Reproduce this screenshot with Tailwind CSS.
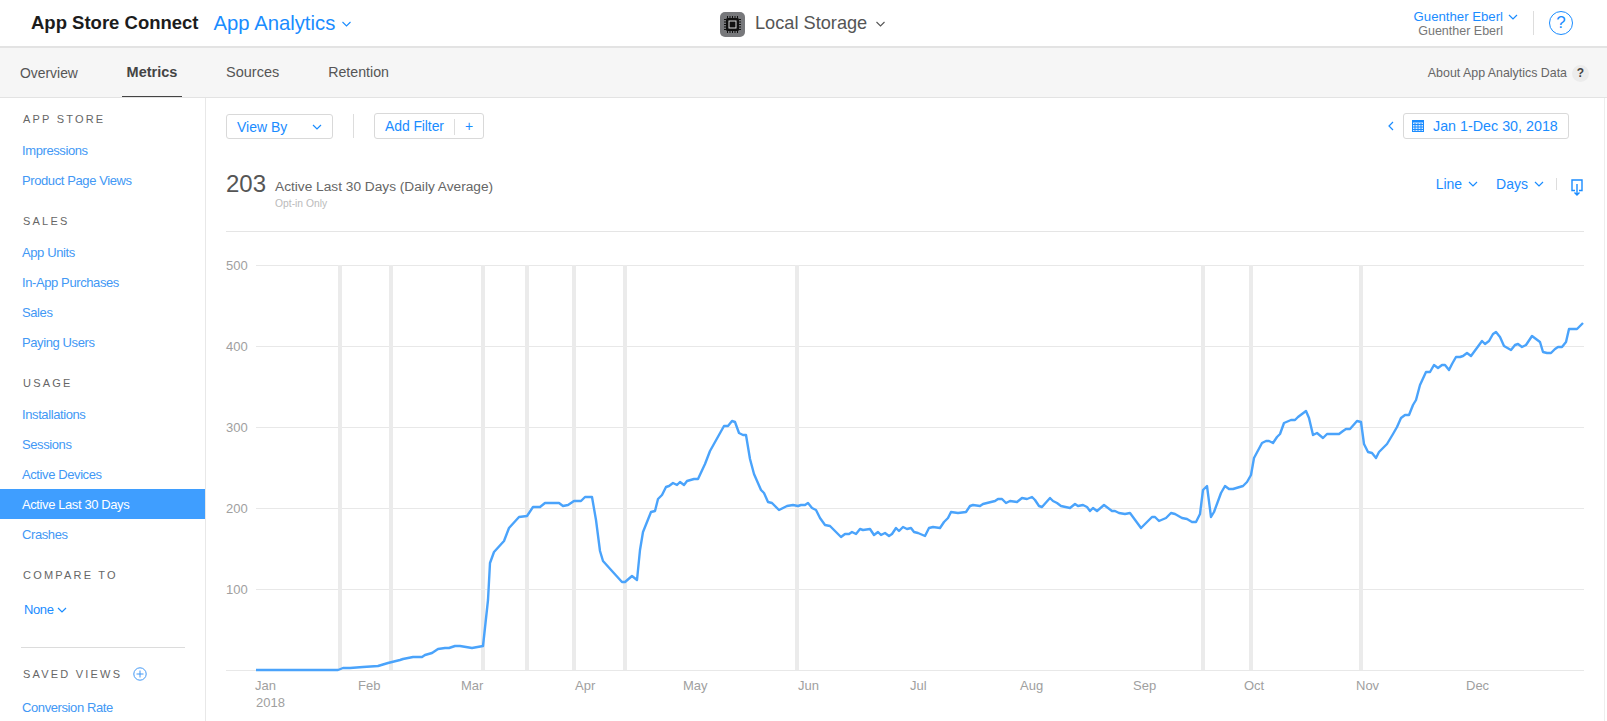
<!DOCTYPE html>
<html>
<head>
  <title>App Store Connect - App Analytics</title>
  <script src="https://cdn.jsdelivr.net/npm/@tailwindcss/browser@4"></script>
</head>
<body class="bg-white h-[721px] overflow-hidden font-['Liberation_Sans',Arial,sans-serif] text-[#1a8cff]">
  <!-- Top header -->
  <header class="h-[48px] border-b-2 border-[#e3e3e3] flex items-center relative">
    <h1 class="ml-[31px] text-[18.500px] font-bold text-[#1c1c1c]">App Store Connect</h1>
    <a class="ml-[15px] text-[20.300px] text-[#1a8cff] flex items-center">App Analytics
      <svg class="ml-[6px] mt-[1px]" width="11" height="6" viewBox="0 0 10 6" fill="none" stroke="currentColor" stroke-width="1.1"><path d="M1 1l4 4 4-4"/></svg>
    </a>
    <div class="absolute left-[720px] top-[11px] flex items-center text-[#555]">
      <svg width="25" height="25" viewBox="0 0 25 25">
        <rect width="25" height="25" rx="5" fill="#77787b"/>
        <rect x="6" y="6" width="13" height="13" rx="1.5" fill="#111"/>
        <rect x="9" y="9" width="7" height="7" fill="none" stroke="#ddd" stroke-width="1"/>
        <path d="M7.500 4v17M10 4v17M12.500 4v17M15 4v17M17.500 4v17M4 7.500h17M4 10h17M4 12.500h17M4 15h17M4 17.500h17" stroke="#111" stroke-width="1" stroke-dasharray="2 13 2 20"/>
      </svg>
      <span class="ml-[10px] text-[18.200px] mt-[-1px]">Local Storage</span>
      <svg class="ml-[8px]" width="11" height="6" viewBox="0 0 10 6" fill="none" stroke="currentColor" stroke-width="1.1"><path d="M1 1l4 4 4-4"/></svg>
    </div>
    <div class="ml-auto flex items-center">
      <div class="text-[13.200px] leading-[14px] text-right mt-[1px]">
        <div class="flex items-center justify-end">Guenther Eberl
          <svg class="ml-[5px]" width="10" height="6" viewBox="0 0 10 6" fill="none" stroke="currentColor" stroke-width="1.2"><path d="M1 1l4 4 4-4"/></svg>
        </div>
        <div class="text-[#777] mr-[15px] text-[12.500px]">Guenther Eberl</div>
      </div>
      <div class="w-[1px] h-[24px] bg-[#ddd] ml-[15px]"></div>
      <div class="w-[24px] h-[24px] ml-[15px] mr-[34px] rounded-full border border-[#1a8cff] flex items-center justify-center text-[17px]">?</div>
    </div>
  </header>

  <!-- Tabs -->
  <nav class="h-[50px] bg-[#f6f6f6] border-b border-[#e3e3e3] flex items-stretch text-[13.900px] text-[#555]">
    <a class="ml-[20px] w-[57px] pt-[1px] flex items-center">Overview</a>
    <a class="ml-[45px] w-[60px] pt-[1px] flex items-center justify-center text-[14.500px] font-bold text-[#444] border-b border-[#444]">Metrics</a>
    <a class="ml-[44px] pt-[1px] flex items-center text-[14.500px]">Sources</a>
    <a class="ml-[49px] pt-[1px] flex items-center text-[14.200px]">Retention</a>
    <div class="ml-auto mr-[18px] pt-[1px] flex items-center text-[12.400px] text-[#666]">About App Analytics Data
      <span class="ml-[5px] w-[17px] h-[17px] rounded-full bg-[#ececec] flex items-center justify-center text-[12px] font-bold text-[#444]">?</span>
    </div>
  </nav>

  <div class="flex h-[623px]">
    <!-- Sidebar -->
    <aside class="w-[206px] shrink-0 border-r border-[#e8e8e8] text-[13px] text-[#4298f5] tracking-[-0.4px]">
      <h2 class="mt-[11px] h-[20px] pl-[23px] flex items-center text-[11px] tracking-[2.2px] text-[#666]">APP STORE</h2>
      <ul class="mt-[6px]">
        <li class="h-[30px] pl-[22px] pt-[2px] flex items-center">Impressions</li>
        <li class="h-[30px] pl-[22px] pt-[2px] flex items-center">Product Page Views</li>
      </ul>
      <h2 class="mt-[16px] h-[20px] pl-[23px] flex items-center text-[11px] tracking-[2.2px] text-[#666]">SALES</h2>
      <ul class="mt-[6px]">
        <li class="h-[30px] pl-[22px] pt-[2px] flex items-center">App Units</li>
        <li class="h-[30px] pl-[22px] pt-[2px] flex items-center">In-App Purchases</li>
        <li class="h-[30px] pl-[22px] pt-[2px] flex items-center">Sales</li>
        <li class="h-[30px] pl-[22px] pt-[2px] flex items-center">Paying Users</li>
      </ul>
      <h2 class="mt-[16px] h-[20px] pl-[23px] flex items-center text-[11px] tracking-[2.2px] text-[#666]">USAGE</h2>
      <ul class="mt-[6px]">
        <li class="h-[30px] pl-[22px] pt-[2px] flex items-center">Installations</li>
        <li class="h-[30px] pl-[22px] pt-[2px] flex items-center">Sessions</li>
        <li class="h-[30px] pl-[22px] pt-[2px] flex items-center">Active Devices</li>
        <li class="h-[30px] pl-[22px] pt-[2px] flex items-center bg-[#3f9eff] text-white">Active Last 30 Days</li>
        <li class="h-[30px] pl-[22px] pt-[2px] flex items-center">Crashes</li>
      </ul>
      <h2 class="mt-[16px] h-[20px] pl-[23px] flex items-center text-[11px] tracking-[2.2px] text-[#666]">COMPARE TO</h2>
      <div class="mt-[15px] h-[20px] pl-[24px] flex items-center text-[#1a8cff]">None
        <svg class="ml-[4px]" width="10" height="6" viewBox="0 0 10 6" fill="none" stroke="currentColor" stroke-width="1.2"><path d="M1 1l4 4 4-4"/></svg>
      </div>
      <div class="mt-[27px] ml-[21px] w-[164px] h-[1px] bg-[#dcdcdc]"></div>
      <div class="mt-[16px] h-[20px] pl-[23px] flex items-center text-[11px] tracking-[2.2px] text-[#666]">SAVED VIEWS
        <svg class="ml-[11px]" width="14" height="14" viewBox="0 0 14 14" fill="none" stroke="#4298f5" stroke-width="1"><circle cx="7" cy="7" r="6.200"/><path d="M3.500 7h7M7 3.500v7"/></svg>
      </div>
      <div class="mt-[8px] h-[30px] pl-[22px] pt-[2px] flex items-center">Conversion Rate</div>
    </aside>

    <!-- Main -->
    <main class="flex-1 min-w-0 relative">
      <div class="absolute left-[1398px] top-0 bottom-0 w-[1px] bg-[#eeeeee]"></div>
      <div class="h-[134px] relative">
        <!-- Toolbar -->
        <div class="flex items-center pt-[15px] pl-[20px] pr-[38px] h-[41px]">
          <div class="w-[107px] h-[25px] mt-[1px] pt-[1px] border border-[#d9d9d9] rounded-[3px] flex items-center justify-between px-[10px] text-[14px]">View By
            <svg width="10" height="6" viewBox="0 0 10 6" fill="none" stroke="currentColor" stroke-width="1.2"><path d="M1 1l4 4 4-4"/></svg>
          </div>
          <div class="w-[1px] h-[24px] bg-[#ddd] ml-[20px]"></div>
          <div class="ml-[20px] w-[110px] h-[26px] pt-[1px] border border-[#d9d9d9] rounded-[3px] flex items-center text-[14px]">
            <span class="pl-[10px] w-[79px] tracking-[-0.1px]">Add Filter</span>
            <span class="w-[1px] h-[16px] bg-[#ddd]"></span>
            <span class="flex-1 text-center">+</span>
          </div>
          <svg class="ml-auto mr-[9px]" width="6" height="10" viewBox="0 0 6 10" fill="none" stroke="currentColor" stroke-width="1.2"><path d="M5 1L1 5l4 4"/></svg>
          <div class="w-[166px] h-[26px] pt-[1px] border border-[#d9d9d9] rounded-[3px] flex items-center pl-[8px] text-[14.300px]">
            <svg class="mt-[-2px]" width="12" height="12" viewBox="0 0 12 12" fill="none" stroke="currentColor"><rect x="0.500" y="0.500" width="11" height="11" fill="#d8eaff"/><path d="M0 4.500h12M0 7h12M0 9.500h12M3 3v9M6 3v9M9 3v9" stroke-width="1"/><path d="M0 1.500h12" stroke-width="2"/></svg>
            <span class="ml-[9px]">Jan 1-Dec 30, 2018</span>
          </div>
        </div>
        <!-- Summary -->
        <div class="flex justify-between pl-[20px] pr-[24px] mt-[30px]">
          <div class="flex items-start">
            <span class="text-[24px] leading-[30px] text-[#555]">203</span>
            <div class="ml-[9px] mt-[10px]">
              <div class="text-[13.700px] leading-[16px] text-[#666]">Active Last 30 Days (Daily Average)</div>
              <div class="text-[10.300px] leading-[14px] mt-[2px] text-[#bbb]">Opt-in Only</div>
            </div>
          </div>
          <div class="flex items-center h-[26px] mt-[2px] text-[14px]">
            Line
            <svg class="ml-[6px]" width="10" height="6" viewBox="0 0 10 6" fill="none" stroke="currentColor" stroke-width="1.2"><path d="M1 1l4 4 4-4"/></svg>
            <span class="ml-[18px]">Days</span>
            <svg class="ml-[6px]" width="10" height="6" viewBox="0 0 10 6" fill="none" stroke="currentColor" stroke-width="1.2"><path d="M1 1l4 4 4-4"/></svg>
            <span class="ml-[12px] w-[1px] h-[12px] bg-[#ddd]"></span>
            <svg class="ml-[14px] mt-[6px]" width="12" height="17" viewBox="0 0 12 17" fill="none" stroke="currentColor" stroke-width="1.400"><path d="M4 11.500H1V1h10v10.500H8"/><path d="M6 5v11M3.500 13.500L6 16l2.500-2.500"/></svg>
          </div>
        </div>
        <div class="absolute left-[20px] right-[23px] bottom-[0px] h-[1px] bg-[#e5e5e5]"></div>
      </div>

      <!-- Chart: viewBox is in page coordinates -->
      <svg class="block" width="1401" height="489" viewBox="206 232 1401 489" font-family="Liberation Sans, Arial, sans-serif" font-size="13" fill="#a0a0a0">
        <g stroke="#e8e8e8" stroke-width="1">
          <path d="M256 265.500H1584M256 346.500H1584M256 427.500H1584M256 508.500H1584M256 589.500H1584"/>
          <path d="M226 670.500H1584"/>
        </g>
        <g fill="#ebebeb">
          <rect x="338" y="265" width="4" height="405"/>
          <rect x="389" y="265" width="4" height="405"/>
          <rect x="481" y="265" width="4" height="405"/>
          <rect x="525" y="265" width="4" height="405"/>
          <rect x="572" y="265" width="4" height="405"/>
          <rect x="623" y="265" width="4" height="405"/>
          <rect x="795" y="265" width="4" height="405"/>
          <rect x="1201" y="265" width="4" height="405"/>
          <rect x="1249" y="265" width="4" height="405"/>
          <rect x="1359" y="265" width="4" height="405"/>
        </g>
        <g>
          <text x="226" y="270">500</text>
          <text x="226" y="351">400</text>
          <text x="226" y="432">300</text>
          <text x="226" y="513">200</text>
          <text x="226" y="594">100</text>
          <text x="255" y="690">Jan</text>
          <text x="256" y="707">2018</text>
          <text x="358" y="690">Feb</text>
          <text x="461" y="690">Mar</text>
          <text x="575" y="690">Apr</text>
          <text x="683" y="690">May</text>
          <text x="798" y="690">Jun</text>
          <text x="910" y="690">Jul</text>
          <text x="1020" y="690">Aug</text>
          <text x="1133" y="690">Sep</text>
          <text x="1244" y="690">Oct</text>
          <text x="1356" y="690">Nov</text>
          <text x="1466" y="690">Dec</text>
        </g>
        <polyline fill="none" stroke="#4aa3fb" stroke-width="2.400" stroke-linejoin="round" points="256,670 338,670 343,668 350,668 363,667 378,666 388,663 392,662 400,660 403,659 413,657 422,657 425,655 432,653 438,649 445,648 449,648 455,646 460,646 472,648 483,646 488,600 490,563 494,552 504,541 509,528 519,517 527,516 533,507 540,507 545,503 552,503 559,503 563,506 568,505 574,501 581,501 585,497 592,497 596,520 600,551 603,561 612,571 622,582 625,582 632,576 637,580 640,550 643,532 651,512 655,511 658,499 662,495 666,487 669,486 673,483 677,485 680,482 684,485 687,481 694,479 698,479 705,464 710,451 724,426 728,426 732,421 735,422 739,433 743,435 746,435 750,459 754,474 761,490 764,493 768,502 772,503 779,510 787,506 793,505 798,506 801,505 805,505 808,503 812,508 816,510 820,518 825,525 830,526 833,529 841,537 845,534 849,534 852,532 856,534 860,529 863,530 870,529 874,535 878,532 881,535 885,533 889,536 892,534 896,528 899,531 903,527 907,529 911,528 914,532 918,533 925,536 929,528 933,527 940,528 944,522 948,518 951,512 958,513 966,512 970,506 973,505 980,506 983,504 991,502 995,501 998,499 1002,499 1006,503 1010,501 1017,502 1022,498 1027,499 1032,497 1035,500 1039,506 1042,507 1050,498 1053,501 1057,503 1061,506 1070,508 1075,504 1078,506 1083,505 1087,507 1090,511 1093,508 1097,511 1104,505 1112,511 1115,511 1119,513 1125,514 1130,513 1141,528 1152,517 1155,517 1159,521 1166,518 1171,513 1175,514 1182,518 1187,519 1192,522 1196,522 1200,514 1203,490 1207,486 1211,517 1214,512 1221,493 1225,486 1229,489 1233,489 1243,486 1247,482 1251,475 1254,458 1262,443 1266,441 1269,441 1273,443 1277,437 1280,434 1284,423 1291,420 1295,420 1298,417 1306,411 1309,418 1313,435 1317,433 1323,438 1327,434 1339,434 1343,431 1346,429 1350,429 1357,421 1361,422 1364,444 1368,452 1372,453 1376,458 1379,452 1387,444 1393,434 1397,427 1401,418 1405,415 1409,415 1413,405 1416,400 1420,385 1426,372 1430,372 1434,365 1438,368 1442,365 1445,365 1449,370 1452,364 1456,357 1460,357 1463,356 1467,353 1471,356 1482,341 1485,344 1489,341 1493,334 1496,332 1500,337 1504,346 1511,350 1515,345 1518,344 1522,347 1526,345 1532,336 1540,342 1543,352 1547,353 1551,353 1555,349 1558,347 1562,347 1566,342 1569,329 1577,329 1583,323"/>
      </svg>
    </main>
  </div>
</body>
</html>
